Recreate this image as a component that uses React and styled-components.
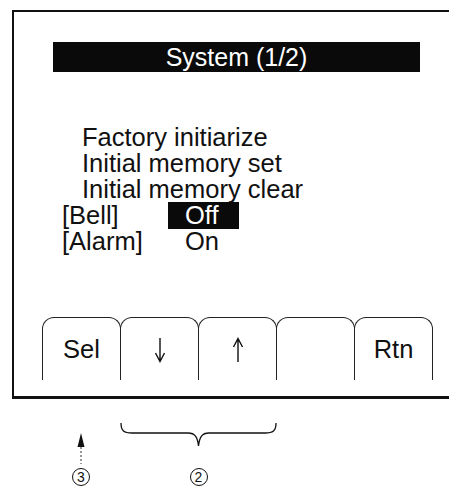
import React from "react";
import styled, { createGlobalStyle } from "styled-components";

const Global = createGlobalStyle`
  html, body { margin: 0; padding: 0; background: #fff; }
  body { font-family: "Liberation Sans", Arial, sans-serif; color: #111; overflow: hidden; }
`;

const Page = styled.div`
  width: 449px;
  height: 496px;
  padding-top: 10px;
  box-sizing: border-box;
  overflow: hidden;
`;

const Screen = styled.div`
  margin-left: 12px;
  width: 445px;
  box-sizing: border-box;
  border-left: 2px solid #111;
  border-top: 2px solid #111;
  border-bottom: 3px solid #111;
  padding: 30px 0 16px 0;
  display: flex;
  flex-direction: column;
`;

const TitleBar = styled.div`
  margin-left: 39px;
  width: 367px;
  height: 30px;
  background: #0a0a0a;
  color: #fff;
  font-size: 25px;
  display: flex;
  align-items: center;
  justify-content: center;
  line-height: 1;
`;

const List = styled.div`
  margin-top: 52px;
  padding-left: 48px;
  display: flex;
  flex-direction: column;
  font-size: 25.5px;
  line-height: 26px;
`;

const MenuItem = styled.div`
  padding-left: 20px;
  height: 26px;
`;

const SettingRow = styled.div`
  display: flex;
  height: 26px;
  align-items: center;
`;

const Label = styled.span`
  width: 106px;
`;

const Value = styled.span`
  padding: 0 20px 0 17px;
  height: 27px;
  line-height: 27px;
  background: ${(p) => (p.$selected ? "#0a0a0a" : "transparent")};
  color: ${(p) => (p.$selected ? "#fff" : "#111")};
`;

const Tabs = styled.div`
  margin-top: 63px;
  padding-left: 28px;
  display: flex;
`;

const Tab = styled.div`
  width: 79px;
  height: 63px;
  box-sizing: border-box;
  border: 1px solid #222;
  border-bottom: none;
  border-radius: 12px 12px 0 0;
  margin-left: ${(p) => (p.$first ? "0" : "-1px")};
  display: flex;
  align-items: center;
  justify-content: center;
  font-size: 25.5px;
  padding-top: 1px;
`;

const Notes = styled.div`
  margin-left: 42px;
  margin-top: 24px;
  display: grid;
  grid-template-columns: 78px 157px;
  grid-template-rows: 45px 18px;
`;

const ArrowCell = styled.div`
  display: flex;
  justify-content: center;
  padding-top: 10px;
`;

const BracketCell = styled.div`
  display: flex;
  justify-content: center;
`;

const CircleCell = styled.div`
  display: flex;
  justify-content: center;
`;

const Circled = styled.span`
  width: 18px;
  height: 18px;
  box-sizing: border-box;
  border: 1.4px solid #111;
  border-radius: 50%;
  font-size: 14px;
  line-height: 16px;
  text-align: center;
  display: block;
`;

const Down = () => (
  <svg width="12" height="26" viewBox="0 0 12 26">
    <path d="M6 1 V24.5 M1.5 16 L6 24.5 L10.5 16" fill="none" stroke="#111" strokeWidth="1.4" />
  </svg>
);

const Up = () => (
  <svg width="12" height="26" viewBox="0 0 12 26">
    <path d="M6 25 V1.5 M1.5 10 L6 1.5 L10.5 10" fill="none" stroke="#111" strokeWidth="1.4" />
  </svg>
);

export default function App() {
  return (
    <Page>
      <Global />
      <Screen>
        <TitleBar>System (1/2)</TitleBar>
        <List>
          <MenuItem>Factory initiarize</MenuItem>
          <MenuItem>Initial memory set</MenuItem>
          <MenuItem>Initial memory clear</MenuItem>
          <SettingRow>
            <Label>[Bell]</Label>
            <Value $selected>Off</Value>
          </SettingRow>
          <SettingRow>
            <Label>[Alarm]</Label>
            <Value>On</Value>
          </SettingRow>
        </List>
        <Tabs>
          <Tab $first>Sel</Tab>
          <Tab><Down /></Tab>
          <Tab><Up /></Tab>
          <Tab />
          <Tab>Rtn</Tab>
        </Tabs>
      </Screen>
      <Notes>
        <ArrowCell>
          <svg width="8" height="32" viewBox="0 0 8 32">
            <path d="M4 0 L7.5 14 L0.5 14 Z" fill="#111" />
            <path d="M4 14 V31" stroke="#333" strokeWidth="1" strokeDasharray="2 2" />
          </svg>
        </ArrowCell>
        <BracketCell>
          <svg width="157" height="24" viewBox="0 0 157 24">
            <path
              d="M1 0 C1 8 4 10 12 10 L68 10 C75 10 77.5 14 78.5 23 C79.5 14 82 10 89 10 L145 10 C153 10 156 8 156 0"
              fill="none"
              stroke="#111"
              strokeWidth="1.3"
            />
          </svg>
        </BracketCell>
        <CircleCell><Circled>3</Circled></CircleCell>
        <CircleCell><Circled>2</Circled></CircleCell>
      </Notes>
    </Page>
  );
}
